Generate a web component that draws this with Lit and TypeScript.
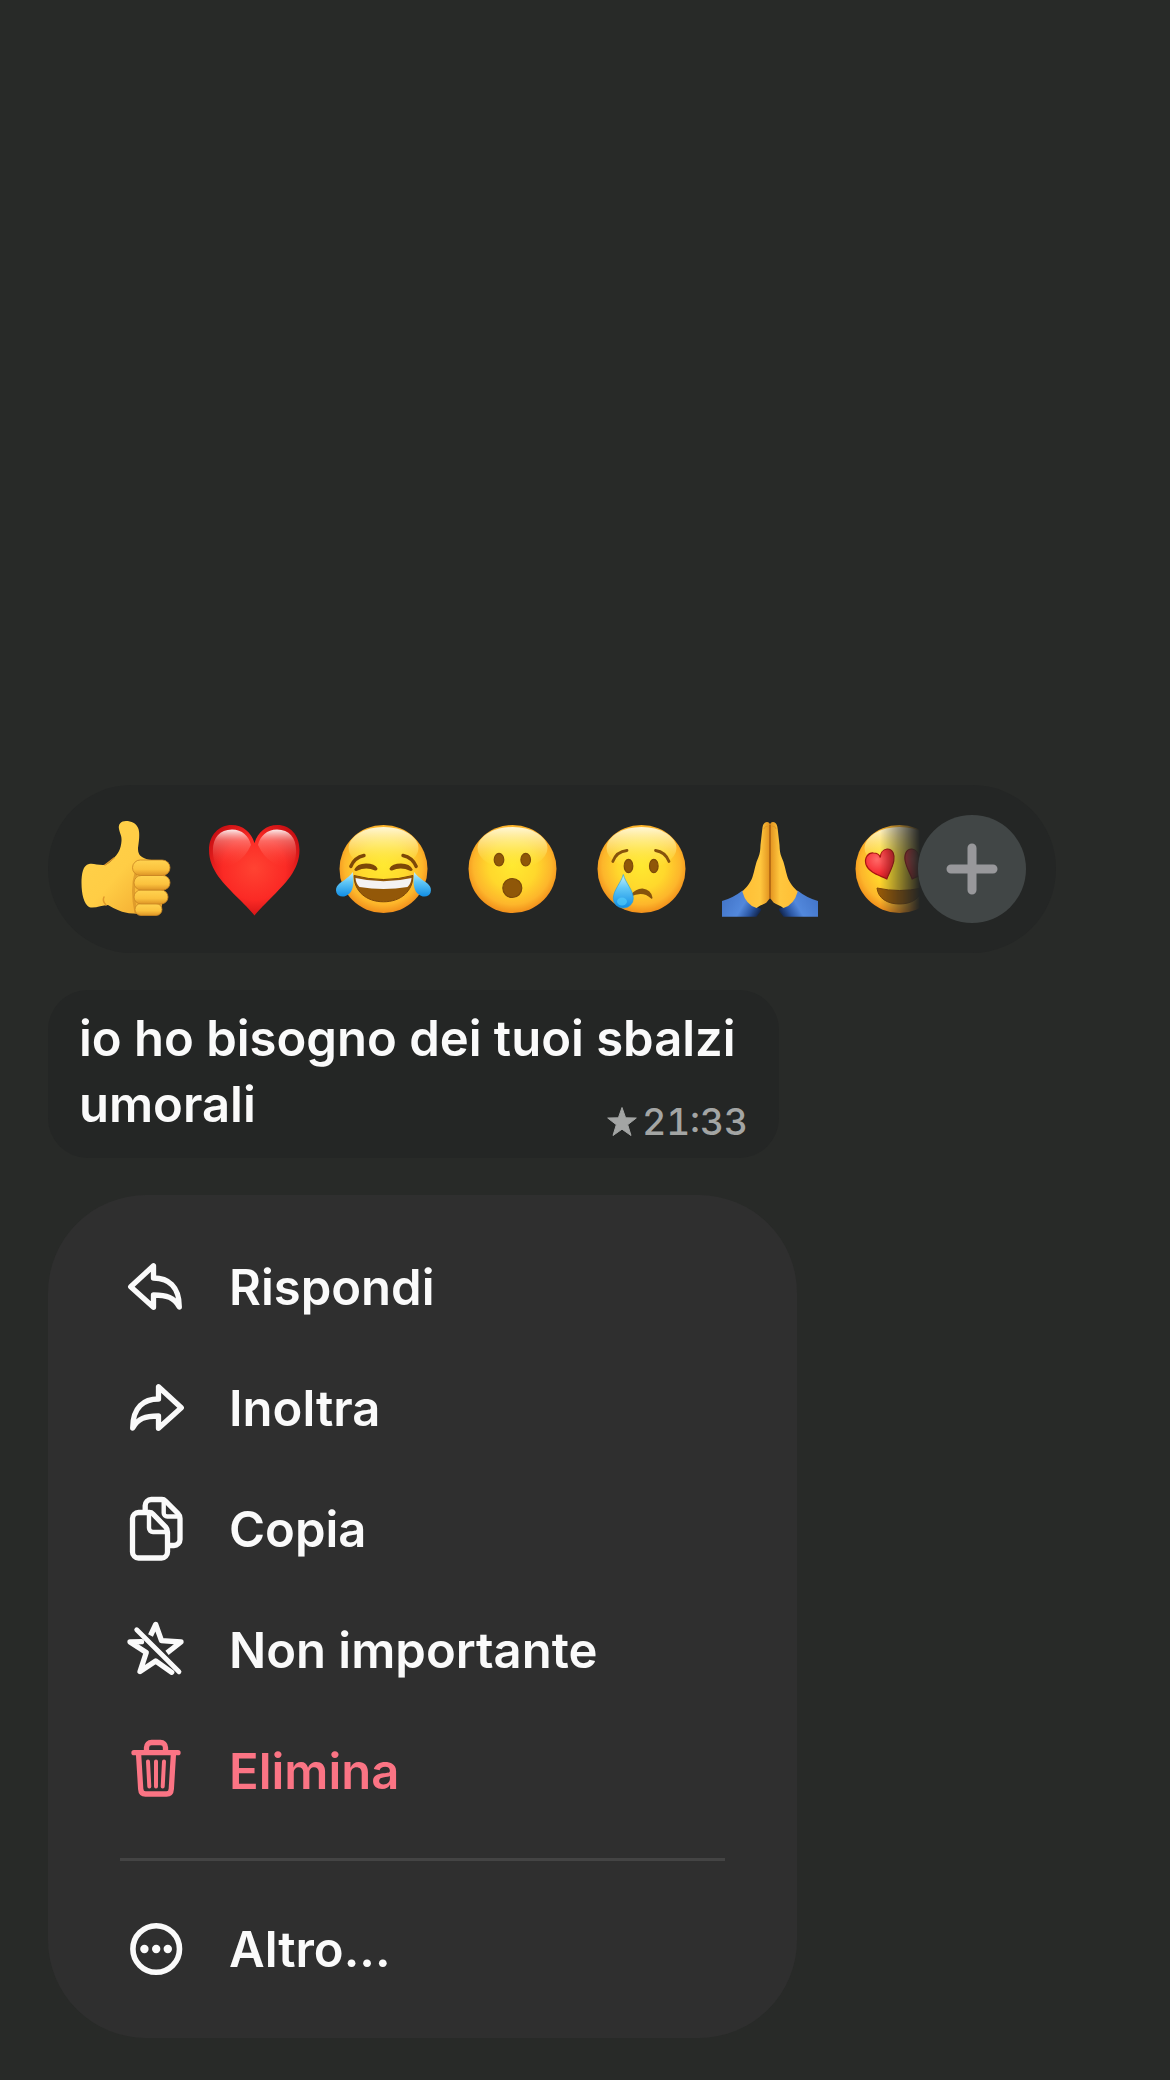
import { LitElement, html, svg, css, type SVGTemplateResult } from "lit";
import { customElement, property } from "lit/decorators.js";
import { classMap } from "lit/directives/class-map.js";

/** Shared yellow ball used by all the smileys. */
const face = svg`
  <defs>
    <radialGradient id="ball" cx=".5" cy=".46" r=".54">
      <stop offset="0" stop-color="#ffe930" />
      <stop offset=".5" stop-color="#ffd82c" />
      <stop offset=".82" stop-color="#fdb62b" />
      <stop offset="1" stop-color="#f18f1b" />
    </radialGradient>
    <linearGradient id="gloss" x1="0" y1="0" x2="0" y2="1">
      <stop offset="0" stop-color="#fffbe0" stop-opacity=".95" />
      <stop offset=".45" stop-color="#fff59a" stop-opacity=".55" />
      <stop offset="1" stop-color="#ffe930" stop-opacity="0" />
    </linearGradient>
    <linearGradient id="tear" x1="0" y1="0" x2="0" y2="1">
      <stop offset="0" stop-color="#c9f0fb" />
      <stop offset=".4" stop-color="#62c8f6" />
      <stop offset="1" stop-color="#108de4" />
    </linearGradient>
  </defs>
  <circle cx="47.5" cy="48" r="44" fill="url(#ball)" />
  <ellipse cx="47.5" cy="27" rx="35" ry="21" fill="url(#gloss)" />
`;

const thumb = svg`
  <defs>
    <linearGradient id="skin" x1="0" y1="0" x2="1" y2="1">
      <stop offset="0" stop-color="#ffd24a" />
      <stop offset=".5" stop-color="#ffcd45" />
      <stop offset="1" stop-color="#efa22b" />
    </linearGradient>
    <linearGradient id="finger" x1="0" y1="0" x2="0" y2="1">
      <stop offset="0" stop-color="#ffd350" />
      <stop offset=".6" stop-color="#fbc23e" />
      <stop offset="1" stop-color="#dd9426" />
    </linearGradient>
  </defs>
  <path fill="url(#skin)" d="M48 0C43 0 40 3 41 8C42 13 44 15 43.500 20C43 28 40 33 35 38C31 42 29 44 25 44C19 44 15 42 11 43C5 44 3.500 53 3.500 62C3.500 73 6 83 11 86C16 88 24 84 30 84C37 88 44 92 55 92.500L80 94C86 90 86 60 88 42C80 38 72 40 67 37.500C61 35 60 32 60 27C61 20 62 13 60.500 8C58.500 2 53 0 48 0Z" />
  <path d="M27 44Q31 41 36 37M28 84Q24 80 26 76" fill="none" stroke="#e09a2b" stroke-width="1.500" stroke-linecap="round" />
  <path d="M58 52Q53 68 58 92" fill="none" stroke="#d18a23" stroke-width="3" opacity=".6" />
  <g fill="url(#finger)" stroke="#c98522" stroke-width=".8">
    <rect x="57" y="82.500" width="27" height="12" rx="6" />
    <rect x="56" y="69" width="34" height="14" rx="7" />
    <rect x="56" y="54.500" width="36" height="14.500" rx="7.250" />
    <rect x="54.500" y="39" width="37.500" height="15.500" rx="7.750" />
  </g>
`;

const heart = svg`
  <defs>
    <radialGradient id="red" cx=".5" cy=".48" r=".58">
      <stop offset="0" stop-color="#ff4332" />
      <stop offset=".6" stop-color="#fb2a25" />
      <stop offset="1" stop-color="#c90f13" />
    </radialGradient>
    <linearGradient id="shine" x1="0" y1="0" x2="0" y2="1">
      <stop offset="0" stop-color="#fff" stop-opacity=".92" />
      <stop offset=".3" stop-color="#ffa8a0" stop-opacity=".5" />
      <stop offset="1" stop-color="#ff4332" stop-opacity="0" />
    </linearGradient>
  </defs>
  <path fill="url(#red)" d="M47.500 94.500C43 89 40 86 32 78C17 63 2 49 2 29C2 14 12 4 24.500 4C36 4 44 11 47.500 22C51 11 59 4 70.500 4C83 4 92.500 14 92.500 29C92.500 49 78 63 63 78C55 86 52 89 47.500 94.500Z" />
  <path fill="url(#shine)" d="M6 32C5 18 12 8.500 25 8.500C35 8.500 42 15 44 24C36 42 20 48 10 46C7.500 41 6.200 37 6 32ZM89 32C90 18 83 8.500 70 8.500C60 8.500 53 15 51 24C59 42 75 48 85 46C87.500 41 88.800 37 89 32Z" />
`;

const joy = svg`
  ${face}
  <g fill="none" stroke="#7d4708" stroke-width="3.400" stroke-linecap="round">
    <path d="M14.800 45.500Q18.500 36.500 28 34.500" />
    <path d="M80.200 45.500Q76.500 36.500 67 34.500" />
  </g>
  <path fill="#7d4708" d="M18.300 48.500Q21 42.500 30 42.500T41.500 47.500Q41.500 50 39 49.500Q30 45.500 21 49.800Q18.500 50.500 18.300 48.500ZM76.700 48.500Q74 42.500 65 42.500T53.500 47.500Q53.500 50 56 49.500Q65 45.500 74 49.800Q76.500 50.500 76.700 48.500Z" />
  <path fill="#935808" stroke="#7d4708" stroke-width="1" d="M18 54.500Q47.500 62.500 77 54.500C77 70 65 80.800 47.500 80.800S18 70 18 54.500Z" />
  <path fill="#f4f2f2" d="M19.500 57Q47.500 63.500 75.500 57Q75 63 71.500 66Q47.500 70 23.500 66Q20 63 19.500 57Z" />
  <path fill="url(#tear)" d="M16.800 51C17.800 60 18 68 13.500 72.500C9 77 2 76.500 .4 71.500C-1.500 65 4 62 8.500 59C12 56.500 14.500 54 16.800 51Z" />
  <path fill="url(#tear)" d="M78.200 51C77.200 60 77 68 81.500 72.500C86 77 93 76.500 94.600 71.500C96.500 65 91 62 86.500 59C83 56.500 80.500 54 78.200 51Z" />
`;

const wow = svg`
  ${face}
  <g fill="#8f5708" stroke="#7c4a09" stroke-width="1.200">
    <ellipse cx="34" cy="38.700" rx="4.800" ry="6.300" />
    <ellipse cx="60.700" cy="38.700" rx="4.800" ry="6.300" />
    <circle cx="47.300" cy="67" r="9.500" />
  </g>
`;

const sad = svg`
  ${face}
  <g fill="none" stroke="#86530c" stroke-width="2.800" stroke-linecap="round">
    <path d="M18.800 40.500Q22.500 30.500 33 29.500" />
    <path d="M61.500 29.500Q71.500 31 75 40.500" />
  </g>
  <g fill="#8f5708" stroke="#7c4a09" stroke-width="1.200">
    <ellipse cx="34.500" cy="45" rx="4.300" ry="6.700" />
    <ellipse cx="59.800" cy="45" rx="4.300" ry="6.700" />
  </g>
  <path fill="#86530c" d="M36.500 74Q42 67.300 48.500 67.500Q57 68.500 58.500 76.500Q58.300 78.600 56.800 77.300Q49 69.500 36.500 75.500Z" />
  <path fill="url(#tear)" stroke="#199ae4" stroke-width=".6" d="M29.300 53.500C31.500 62 39.300 69 39.300 77.500A10 9.600 0 0 1 19.300 77.500C19.300 69 27.100 62 29.300 53.500Z" />
  <ellipse cx="28" cy="80.500" rx="5" ry="4" fill="#59d2fb" opacity=".6" />
`;

const pray = svg`
  <defs>
    <linearGradient id="palm" x1="0" y1="0" x2="1" y2="0">
      <stop offset="0" stop-color="#ffbe35" />
      <stop offset=".65" stop-color="#ffc73e" />
      <stop offset="1" stop-color="#e2921f" />
    </linearGradient>
    <linearGradient id="sleeve" x1="0" y1=".3" x2="1" y2=".7">
      <stop offset="0" stop-color="#4274c8" />
      <stop offset=".55" stop-color="#5288dc" />
      <stop offset=".8" stop-color="#2c58a5" />
      <stop offset="1" stop-color="#142a55" />
    </linearGradient>
    <g id="arm">
      <path fill="url(#sleeve)" d="M0 80Q11 77 20.500 69.500L36 87Q41 87 38 91L34.500 95.800H0Z" />
      <path fill="url(#palm)" d="M45 1C41.500 1.500 40.800 4 40.300 8L38.500 24C38.300 29 38 32 36.500 36C33.500 42 32.500 50 30.500 56C28.500 62 24 67 20.300 70.500Q24 84 34.500 87C38 84 42 83.500 44.500 81.500L48 77V5C48 2 47 1 45 1Z" />
      <path d="M42 8Q43 4 47 6" stroke="#e29a26" stroke-width="1" fill="none" />
    </g>
  </defs>
  <g transform="translate(-1 0)">
    <use href="#arm" />
    <use href="#arm" transform="matrix(-1 0 0 1 96 0)" />
    <path d="M48 4V77" stroke="#a75c10" stroke-width="1.400" />
  </g>
`;

const love = svg`
  ${face}
  <defs>
    <radialGradient id="eye" cx=".4" cy=".35" r=".7">
      <stop offset="0" stop-color="#ff6a68" />
      <stop offset=".6" stop-color="#f73238" />
      <stop offset="1" stop-color="#d9181f" />
    </radialGradient>
  </defs>
  <g fill="url(#eye)" stroke="#a91512" stroke-width="1.200">
    <path d="M34.800 58C28 54.500 17 52 14 43.500C12 36.500 16.500 31.500 21.500 32C25 32 27.500 34 28.300 36.500C28.300 32 31 28.500 35 28C41 27.800 43 34 41.800 40C40.500 47 37 52 34.800 58Z" />
    <path d="M60.200 58C67 54.500 78 52 81 43.500C83 36.500 78.500 31.500 73.500 32C70 32 67.500 34 66.700 36.500C66.700 32 64 28.500 60 28C54 27.800 52 34 53.200 40C54.500 47 58 52 60.200 58Z" />
  </g>
  <path fill="#935808" stroke="#7d4708" stroke-width="1" d="M25 67Q47.500 72 70 67C69 77 60 83 47.500 83S26 77 25 67Z" />
`;

const REACTIONS: { name: string; art: SVGTemplateResult }[] = [
  { name: "Mi piace", art: thumb },
  { name: "Cuore", art: heart },
  { name: "Risata", art: joy },
  { name: "Stupore", art: wow },
  { name: "Tristezza", art: sad },
  { name: "Grazie", art: pray },
  { name: "Amore", art: love },
];

const ACTIONS: { label: string; icon: SVGTemplateResult; danger?: boolean }[] = [
  {
    label: "Rispondi",
    icon: svg`<path d="M6.700 31.700L29.500 10.800V23C44 23 55.300 31 55.300 52C50 42.500 43 40 29.500 40V52.300Z" />`,
  },
  {
    label: "Inoltra",
    icon: svg`<path d="M57.300 31.700L34.500 10.800V23C20 23 8.700 31 8.700 52C14 42.500 21 40 34.500 40V52.300Z" />`,
  },
  {
    label: "Copia",
    icon: svg`
      <path d="M14.500 15.500H25.500Q27.500 15.500 29 17L41.700 30Q43.500 32 43.500 35V55a6 6 0 0 1-6 6H14.500a6 6 0 0 1-6-6V21.500a6 6 0 0 1 6-6Z" />
      <path d="M25 16V31a4 4 0 0 0 4 4H43" stroke-width="4.400" />
      <path d="M21.200 14V8.500a6 6 0 0 1 6-6H38Q40 2.500 41.500 4L54 16.500Q56 18.500 56 21.500V42.500a6 6 0 0 1-6 6H45" stroke-linecap="butt" />
      <path d="M39.700 3V16a3.500 3.500 0 0 0 3.500 3.500H55" stroke-width="4.400" />`,
  },
  {
    label: "Non importante",
    icon: svg`
      <path d="M26.500 17.500L31.700 6.500L37.500 22.700L57 24L43 34.800" stroke-linecap="butt" />
      <path d="M17.500 23.700L6 24L22.300 34.500L16 53.500L31.700 43L47.700 54.300" />
      <path d="M12.700 11.700L55 53.700" stroke-width="4.800" />`,
  },
  {
    label: "Elimina",
    danger: true,
    icon: svg`
      <path d="M10 13.700H54M22.500 13V8.500a5 5 0 0 1 5-5H36.500a5 5 0 0 1 5 5V13" />
      <path d="M14.500 14L16.700 50Q17 55 21.500 55H42.500Q47 55 47.300 50L49.500 14" />
      <path d="M24 22.500L25.300 47.500M32 22.500V47.500M40 22.500L38.700 47.500" stroke-width="4" />`,
  },
];

const MORE = {
  label: "Altro...",
  icon: svg`
    <circle cx="32.200" cy="32" r="23.300" stroke-width="5.600" />
    <g fill="currentColor" stroke="none">
      <circle cx="20.400" cy="32" r="4.200" />
      <circle cx="32.200" cy="32" r="4.200" />
      <circle cx="43.800" cy="32" r="4.200" />
    </g>`,
};

@customElement("reaction-button")
class ReactionButton extends LitElement {
  @property({ attribute: false }) art?: SVGTemplateResult;
  @property() name = "";

  static styles = css`
    :host {
      display: block;
      flex: none;
    }
    .reaction {
      display: block;
      padding: 0;
      border: 0;
      background: none;
      cursor: pointer;
    }
    .art {
      display: block;
      width: 96px;
      height: 96px;
      overflow: visible;
    }
  `;

  render() {
    return html`<button class="reaction" type="button" aria-label=${this.name}>
      <svg class="art" viewBox="0 0 96 96" aria-hidden="true">${this.art}</svg>
    </button>`;
  }
}

@customElement("menu-action")
class MenuAction extends LitElement {
  @property({ attribute: false }) icon?: SVGTemplateResult;
  @property() label = "";
  @property({ type: Boolean }) danger = false;

  static styles = css`
    :host {
      display: block;
    }
    .action {
      display: flex;
      align-items: center;
      gap: 40px;
      width: 100%;
      height: 121px;
      padding: 0 76px;
      border: 0;
      background: none;
      color: #fafafa;
      font: 600 49px/60px Inter, "Liberation Sans", sans-serif;
      text-align: left;
      cursor: pointer;
    }
    .danger {
      color: #fb7484;
    }
    .icon {
      flex: none;
      width: 65px;
      height: 65px;
      overflow: visible;
      fill: none;
      stroke: currentColor;
      stroke-width: 5.3;
      stroke-linecap: round;
      stroke-linejoin: round;
    }
  `;

  render() {
    return html`<button class=${classMap({ action: true, danger: this.danger })} type="button">
      <svg class="icon" viewBox="0 0 65 65" aria-hidden="true">${this.icon}</svg>
      <span>${this.label}</span>
    </button>`;
  }
}

@customElement("app-root")
class AppRoot extends LitElement {
  static styles = css`
    :host {
      display: flex;
      flex-direction: column;
      justify-content: flex-end;
      gap: 37px;
      box-sizing: border-box;
      min-height: 100vh;
      padding: 42px 114px 42px 48px;
      background: #282a28;
      color: #fafafa;
      font-family: Inter, "Liberation Sans", sans-serif;
    }
    .reactions {
      display: flex;
      align-items: center;
      padding: 30px;
      border-radius: 84px;
      background: #242625;
    }
    .strip {
      display: flex;
      flex: 1;
      gap: 33px;
      min-width: 0;
      margin-right: -10px;
      overflow: hidden;
      -webkit-mask-image: linear-gradient(to left, transparent 8px, #000 48px);
      mask-image: linear-gradient(to left, transparent 8px, #000 48px);
    }
    .add {
      position: relative;
      display: grid;
      flex: none;
      place-items: center;
      width: 108px;
      height: 108px;
      padding: 0;
      border: 0;
      border-radius: 50%;
      background: #414646;
      color: #98989b;
      cursor: pointer;
    }
    .plus {
      width: 52px;
      height: 52px;
      fill: none;
      stroke: currentColor;
      stroke-width: 9;
      stroke-linecap: round;
    }
    .bubble {
      display: flow-root;
      box-sizing: border-box;
      width: 100%;
      max-width: 731px;
      padding: 16px 31px 14px;
      border-radius: 40px;
      background: #242625;
      font-size: 49px;
      font-weight: 600;
      line-height: 66px;
    }
    .meta {
      display: flex;
      float: right;
      align-items: center;
      gap: 5px;
      margin-top: 28px;
      color: #a3a5a4;
      font-size: 37px;
      font-weight: 500;
      font-variant-numeric: tabular-nums;
      line-height: 44px;
    }
    .star {
      width: 30px;
      height: 32px;
      fill: currentColor;
      stroke: currentColor;
      stroke-linejoin: round;
    }
    .menu {
      box-sizing: border-box;
      width: 100%;
      max-width: 749px;
      padding: 32px 0 28px;
      border-radius: 98px;
      background: #2f2f2f;
    }
    .divider {
      height: 3px;
      margin: 26px 72px 28px;
      border: 0;
      background: #444;
    }
  `;

  render() {
    return html`
      <section class="reactions" aria-label="Reazioni">
        <div class="strip">
          ${REACTIONS.map((r) => html`<reaction-button .art=${r.art} name=${r.name}></reaction-button>`)}
        </div>
        <button class="add" type="button" aria-label="Altre reazioni">
          <svg class="plus" viewBox="0 0 52 52" aria-hidden="true"><path d="M5 26H47M26 5V47" /></svg>
        </button>
      </section>
      <article class="bubble">
        <span>io ho bisogno dei tuoi sbalzi umorali</span>
        <span class="meta">
          <svg class="star" viewBox="0 0 30 32" aria-hidden="true">
            <path d="M15 1.500L18.600 11.800L29.300 12L20.700 18.700L24 29.500L15 23.200L6 29.500L9.300 18.700L.7 12L11.400 11.800Z" />
          </svg>
          <time datetime="21:33">21:33</time>
        </span>
      </article>
      <nav class="menu" aria-label="Azioni messaggio">
        ${ACTIONS.map(
          (a) => html`<menu-action .icon=${a.icon} label=${a.label} ?danger=${a.danger}></menu-action>`
        )}
        <hr class="divider" />
        <menu-action .icon=${MORE.icon} label=${MORE.label}></menu-action>
      </nav>
    `;
  }
}
